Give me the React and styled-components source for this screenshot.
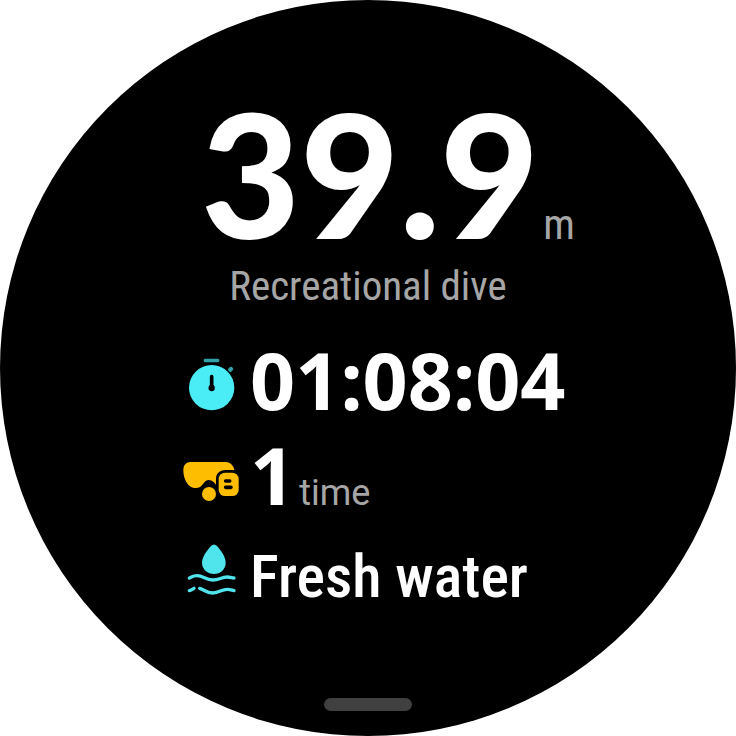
import styled, { createGlobalStyle } from "styled-components";

const GlobalStyle = createGlobalStyle`
  body {
    margin: 0;
    background: #fff;
  }
`;

const Face = styled.main`
  box-sizing: border-box;
  width: 100%;
  aspect-ratio: 1;
  border-radius: 50%;
  background: #000;
  color: #fff;
  display: flex;
  flex-direction: column;
  align-items: center;
  padding: 93px 0 25px;
  font-family: "Noto Sans", sans-serif;
`;

const Depth = styled.div`
  display: flex;
  align-items: baseline;
  gap: 4px;
  padding-left: 40px;
  font-family: Lato, sans-serif;
  font-size: 171px;
  font-weight: 900;
  line-height: 160px;
`;

const Unit = styled.span`
  color: #a6a6a6;
  font-family: ${(props) => (props.$narrow ? '"Roboto Condensed", ' : "")}Roboto, sans-serif;
  font-size: ${(props) => (props.$narrow ? "42px" : "36px")};
  font-weight: 400;
  line-height: 48px;
`;

const Mode = styled.p`
  margin: 3px 0 0;
  color: #a6a6a6;
  font-family: "Roboto Condensed", Roboto, sans-serif;
  font-size: 41px;
  font-weight: 400;
  line-height: 60px;
`;

const Stats = styled.ul`
  list-style: none;
  margin: 21px 0 0;
  padding: 0;
  width: 372px;
`;

const Row = styled.li`
  display: flex;
  align-items: center;
  gap: 8px;
  height: 96px;
  white-space: nowrap;
`;

const Icon = styled.svg`
  flex: none;
  width: 60px;
  height: 72px;
`;

const Value = styled.div`
  display: flex;
  align-items: baseline;
  gap: 4px;
  padding-bottom: 10px;
  font-size: 79px;
  font-weight: 700;
  line-height: 80px;
`;

const Water = styled.div`
  font-family: "Roboto Condensed", Roboto, sans-serif;
  font-size: 60px;
  font-weight: 500;
  line-height: 80px;
`;

const Handle = styled.div`
  margin-top: auto;
  width: 88px;
  height: 13px;
  border-radius: 7px;
  background: #404040;
`;

const StopwatchIcon = () => (
  <Icon viewBox="21 12 180 216" aria-hidden="true">
    <rect x="86" y="41" width="47" height="11" rx="5" fill="#30a1a6" />
    <path d="M165 75L168 72" stroke="#30a1a6" strokeWidth="13" strokeLinecap="round" />
    <circle cx="110" cy="128" r="72" fill="#000" />
    <circle cx="110" cy="128" r="68" fill="#4aecf5" />
    <path d="M110 95V128" stroke="#000" strokeWidth="11" strokeLinecap="round" />
    <circle cx="110" cy="129" r="9.5" fill="#000" />
  </Icon>
);

const MaskIcon = () => (
  <Icon viewBox="21 0 180 216" aria-hidden="true">
    <path
      d="M47 51H151C165 51 176 61 178 75H151C134 75 123 86 123 102V119C118 112 111 105 102 105C90 105 86 116 78 124C74 128 70 129 64 129H58C42 129 25 106 25 76C25 60 34 51 47 51Z"
      fill="#ffbd00"
    />
    <circle cx="102" cy="147" r="21" fill="#ffbd00" />
    <rect x="131" y="83" width="60" height="70" rx="19" fill="#ffbd00" />
    <path d="M152 108H164M152 127H168" stroke="#000" strokeWidth="11" strokeLinecap="round" />
  </Icon>
);

const WaterIcon = () => (
  <Icon viewBox="21 18 180 216" aria-hidden="true">
    <path
      d="M108 33Q117 24 126 33C138 46 152 66 152 83C152 103 136 117 117 117C98 117 81 103 81 83C81 66 96 46 108 33Z"
      fill="#50e4ec"
    />
    <g fill="none" stroke="#50e4ec" strokeWidth="10" strokeLinecap="round">
      <path d="M43 129C50 126 54 122 66 122C85 122 92 135 113 135C134 135 138 126 157 126C166 126 171 129 177 129" />
      <path d="M43 167C47 166 52 163 57 160M74 160C88 164 95 174 113 174C134 174 138 163 157 163C167 163 171 166 177 167" />
    </g>
  </Icon>
);

export default function App() {
  return (
    <>
      <GlobalStyle />
      <Face>
        <Depth>
          39.9<Unit $narrow>m</Unit>
        </Depth>
        <Mode>Recreational dive</Mode>
        <Stats>
          <Row>
            <StopwatchIcon />
            <Value>01:08:04</Value>
          </Row>
          <Row>
            <MaskIcon />
            <Value>
              1<Unit>time</Unit>
            </Value>
          </Row>
          <Row>
            <WaterIcon />
            <Water>Fresh water</Water>
          </Row>
        </Stats>
        <Handle />
      </Face>
    </>
  );
}
